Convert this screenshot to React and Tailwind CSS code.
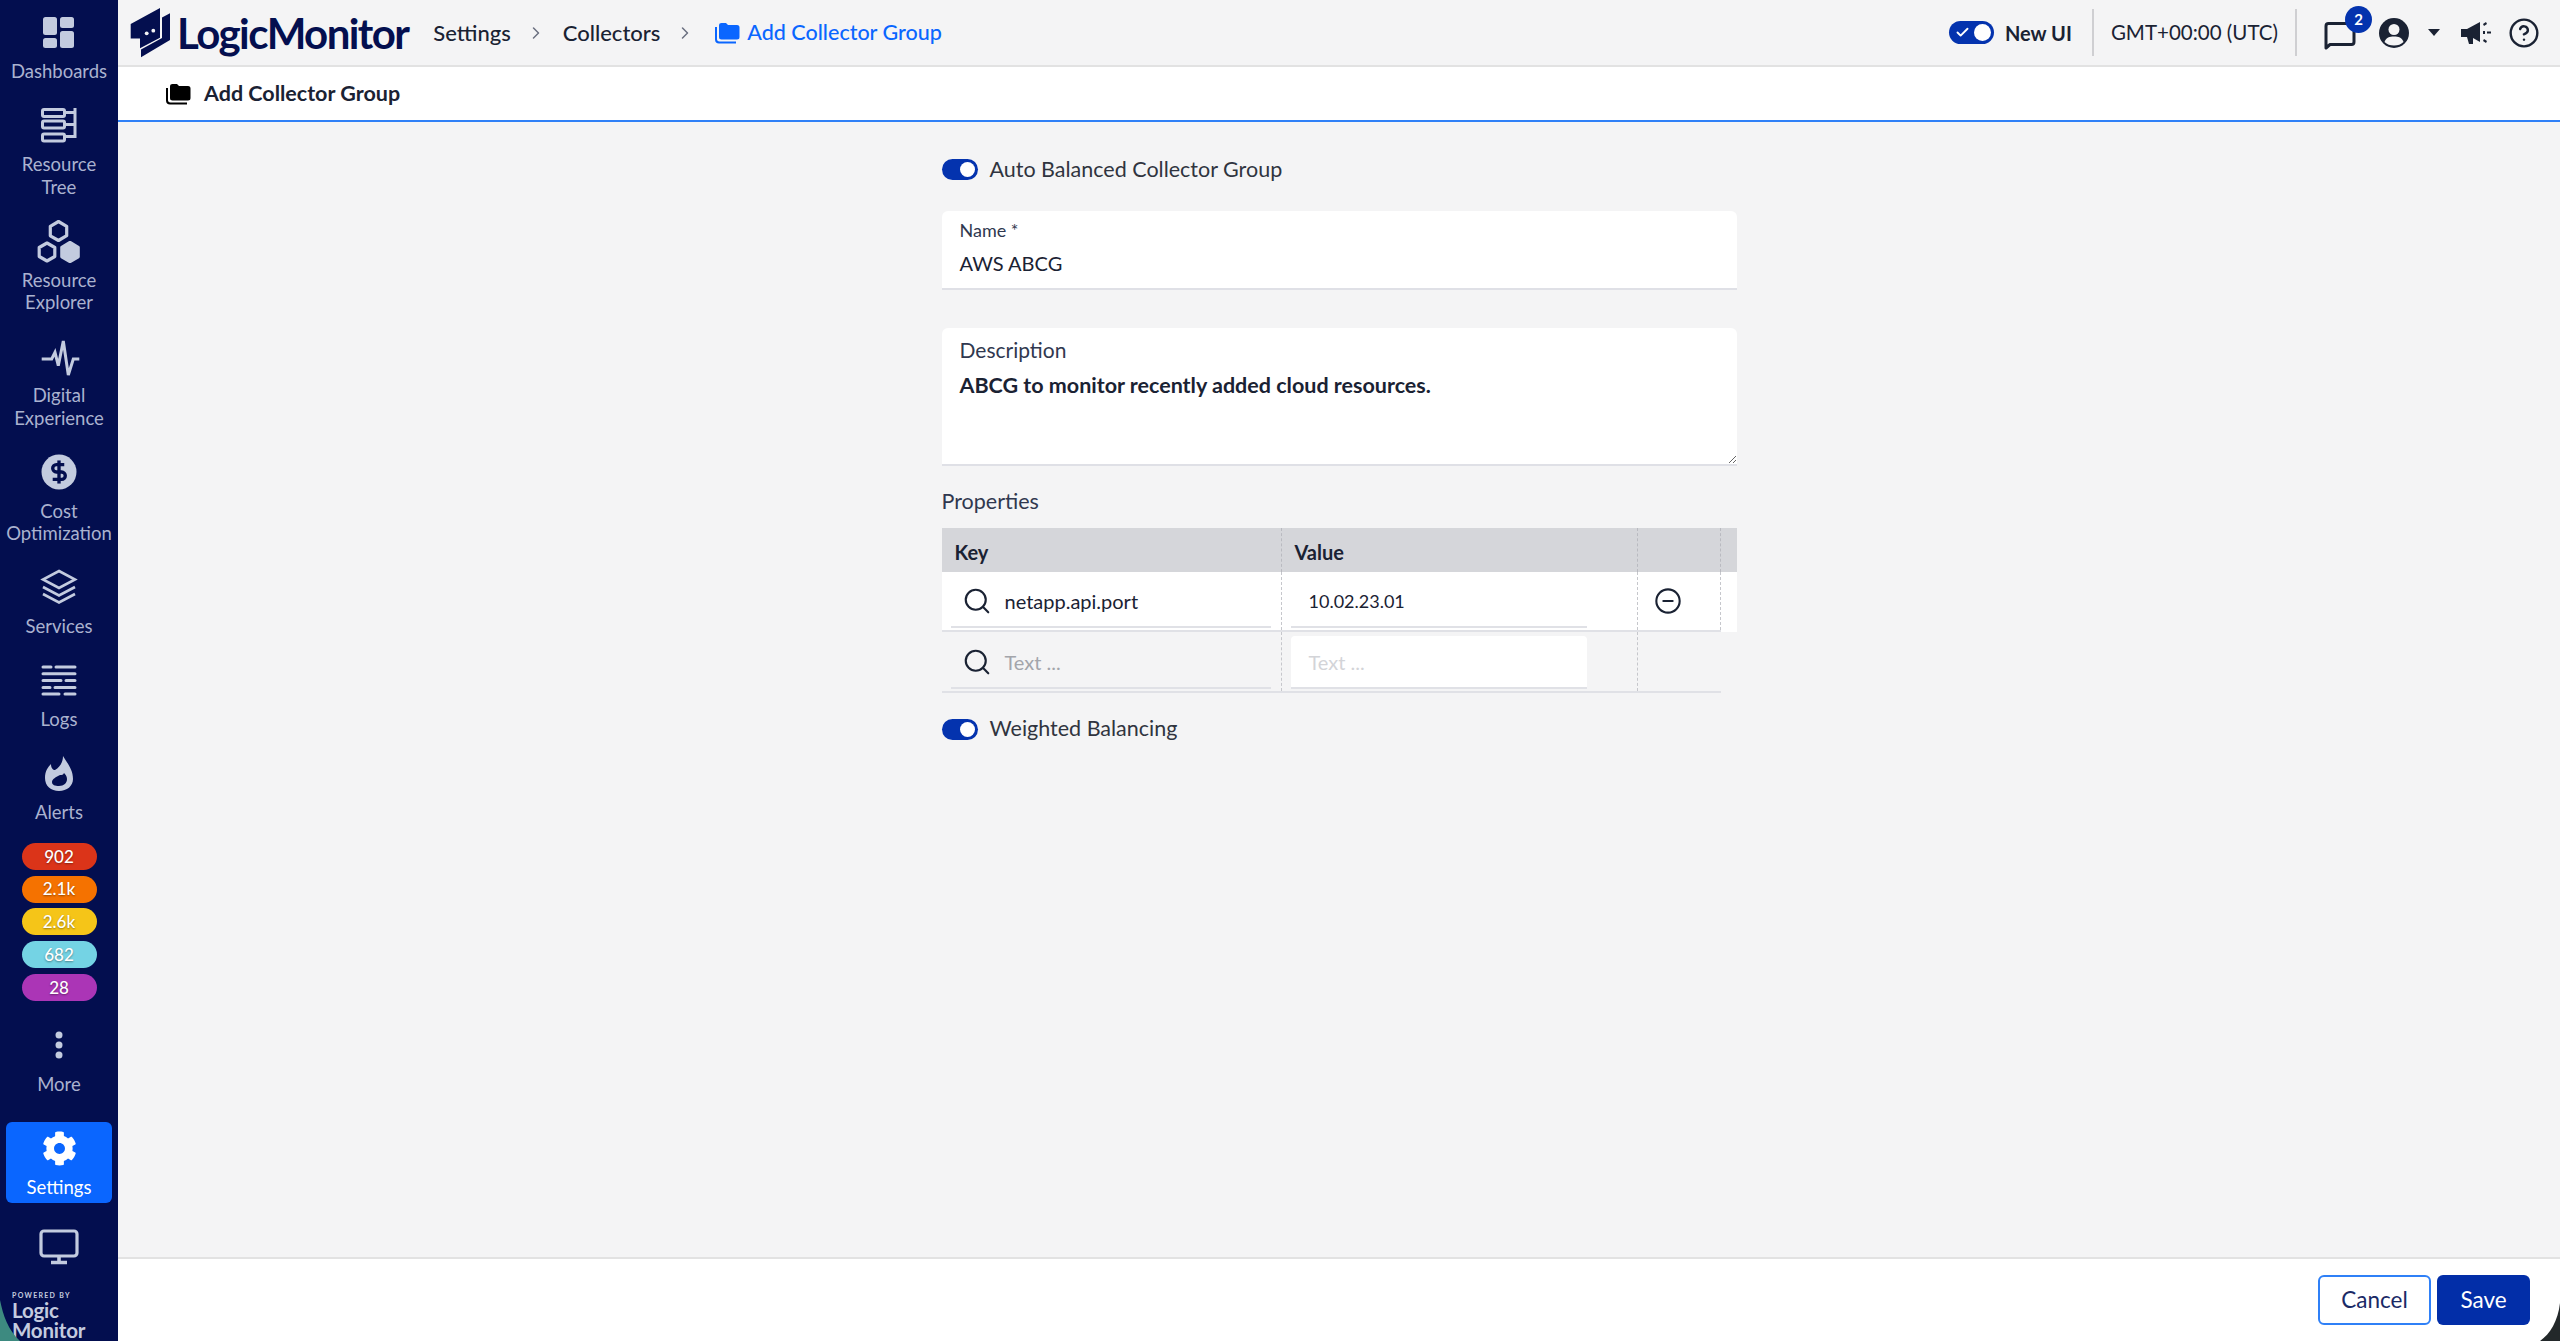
import React from 'react'
import { Search, ChevronRight, CircleMinus, CircleHelp, Check } from 'lucide-react'
import { FaCog } from 'react-icons/fa'

const hex = (cx, cy, r) =>
    [0, 1, 2, 3, 4, 5]
        .map((i) => {
            const a = (Math.PI / 3) * i - Math.PI / 2
            return `${(cx + r * Math.cos(a)).toFixed(1)},${(cy + r * Math.sin(a)).toFixed(1)}`
        })
        .join(' ')

const DashboardsIcon = () => (
    <svg viewBox="0 0 36 36" className="w-9 h-9 overflow-visible" fill="currentColor">
        <rect x="2" y="3" width="14" height="18" rx="2.5" />
        <rect x="2" y="24" width="14" height="10" rx="2.5" />
        <rect x="19" y="3" width="14" height="11" rx="2.5" />
        <rect x="19" y="17" width="14" height="17" rx="2.5" />
    </svg>
)

const TreeIcon = () => (
    <svg viewBox="0 0 36 36" className="w-9 h-9 overflow-visible" fill="none" stroke="currentColor" strokeWidth="3">
        <rect x="1.5" y="2.5" width="22" height="7" rx="1.5" />
        <rect x="1.5" y="14" width="22" height="7" rx="1.5" />
        <rect x="1.5" y="27" width="22" height="7" rx="1.5" />
        <path d="M24 5.5h10M24 17.500h10M24 29.500h10M34 1v30" />
    </svg>
)

const ExplorerIcon = () => (
    <svg viewBox="0 0 36 36" className="w-9 h-9 overflow-visible" fill="none" stroke="currentColor" strokeWidth="3.2" strokeLinejoin="round">
        <polygon points={hex(17.5, 8, 9.5)} />
        <polygon points={hex(6, 29, 9)} />
        <polygon points={hex(29, 29, 9.5)} fill="currentColor" />
    </svg>
)

const PulseIcon = () => (
    <svg viewBox="0 0 36 36" className="w-9 h-9 overflow-visible" fill="none" stroke="currentColor" strokeWidth="3">
        <path d="M0.700 21H10.700L14 14.300L17.300 27.700L22.300 3L27.300 37L32.300 21H38.300" />
    </svg>
)

const CostIcon = () => (
    <svg viewBox="0 0 36 36" className="w-9 h-9 overflow-visible">
        <circle cx="18" cy="18" r="17.500" fill="currentColor" />
        <g transform="translate(5.400 5.400) scale(1.05)" fill="none" stroke="#030e4f" strokeWidth="3.200">
            <path d="M17 5H9.500a3.500 3.500 0 0 0 0 7h5a3.500 3.500 0 0 1 0 7H6" />
            <path d="M12 1v22" />
        </g>
    </svg>
)

const LayersIcon = () => (
    <svg viewBox="0 0 36 36" className="w-9 h-9 overflow-visible" fill="none" stroke="currentColor" strokeWidth="2.600">
        <path d="M18 2L34 10.500L18 19L2 10.500Z" />
        <path d="M2 18L18 26.500L34 18" />
        <path d="M2 25L18 33.500L34 25" />
    </svg>
)

const LogsIcon = () => (
    <svg viewBox="0 0 36 36" className="w-9 h-9 overflow-visible" fill="none" stroke="currentColor" strokeWidth="3" strokeLinecap="round">
        <path d="M2 5H10M15 5H34M2 11.700H34M2 18.500H20M25 18.500H34M2 25.400H9M14 25.400H34M2 32H18M24 32H34" />
    </svg>
)

const FlameIcon = () => (
    <svg viewBox="0 0 36 36" className="w-9 h-9 overflow-visible" fill="currentColor" fillRule="evenodd">
        <path d="M22 1C26 8 32 14 32 24C32 31 26 36 18 36C10 36 4 31 4 23C4 16 7 12 10 9C10 13 12 15 14 15C19 12 22 7 22 1ZM19 20C15 22 11 24 11 27C11 30 14 31 18 31C23 31 26 28 26 24C26 21 24 19 23 18C22 20 21 20 19 20Z" />
    </svg>
)

const DotsIcon = () => (
    <svg viewBox="0 0 36 36" className="w-9 h-9 overflow-visible" fill="currentColor">
        <circle cx="18" cy="8" r="3.500" />
        <circle cx="18" cy="18" r="3.500" />
        <circle cx="18" cy="28" r="3.500" />
    </svg>
)

const FolderIcon = ({ className }) => (
    <svg viewBox="0 0 26 22" className={className} fill="currentColor">
        <path d="M5 3.500C5 1.800 6 1 7.500 1H12L14 3H23C24.800 3 25.500 4 25.500 5.500V15C25.500 16.800 24.500 17.500 23 17.500H7.500C6 17.500 5 16.800 5 15Z" />
        <path d="M1 5H3V17C3 18.500 3.800 19.500 5.500 19.500H22V21.500H5C2.500 21.500 1 20 1 17.500Z" />
    </svg>
)

const NavItem = ({ icon, label, last }) => (
    <div className={`flex flex-col items-center ${last ? '' : 'mb-[24.5px]'}`}>
        <div className="h-9 w-9 text-[#c3cbdf]">{icon}</div>
        <div className="mt-[10px] text-center text-[18.500px] leading-[22.5px] text-[#aab2cf]">{label}</div>
    </div>
)

const Toggle = ({ check, className = '' }) => (
    <div className={`relative flex items-center justify-end rounded-full bg-[#0433ae] p-[3px] ${className}`}>
        {check && <Check className="absolute left-[6px] w-[15px] h-[15px] text-white" strokeWidth={3} />}
        <div className="h-full aspect-square rounded-full bg-white" />
    </div>
)

const alertCounts = [
    { text: '902', color: 'bg-[#db3419]' },
    { text: '2.1k', color: 'bg-[#f57200]' },
    { text: '2.6k', color: 'bg-[#f5c518]' },
    { text: '682', color: 'bg-[#74d3e4]' },
    { text: '28', color: 'bg-[#ab35b6]' },
]

const Sidebar = () => (
    <div className="w-[118px] h-full shrink-0 flex flex-col overflow-hidden bg-[#030e4f] pt-[14px]">
        <NavItem icon={<DashboardsIcon />} label="Dashboards" />
        <NavItem icon={<TreeIcon />} label={<>Resource<br />Tree</>} />
        <NavItem icon={<ExplorerIcon />} label={<>Resource<br />Explorer</>} />
        <NavItem icon={<PulseIcon />} label={<>Digital<br />Experience</>} />
        <NavItem icon={<CostIcon />} label={<>Cost<br />Optimization</>} />
        <NavItem icon={<LayersIcon />} label="Services" />
        <NavItem icon={<LogsIcon />} label="Logs" />
        <NavItem icon={<FlameIcon />} label="Alerts" last />
        <div className="mt-[19.5px] flex flex-col items-center gap-[5.700px]">
            {alertCounts.map((c) => (
                <div
                    key={c.text}
                    className={`w-[75px] h-[27px] rounded-full flex items-center justify-center text-[17px] font-medium text-white [text-shadow:0_1px_2px_rgba(0,0,0,0.4)] ${c.color}`}
                >
                    {c.text}
                </div>
            ))}
        </div>
        <div className="mt-[26px]">
            <NavItem icon={<DotsIcon />} label="More" last />
        </div>
        <div className="mx-[6px] mt-[26.5px] h-[81px] rounded-[6px] bg-[#0a66ff] pt-[9px] flex flex-col items-center text-white">
            <div className="h-9 w-9 flex items-center justify-center">
                <FaCog className="w-[35px] h-[35px]" />
            </div>
            <div className="mt-[9px] text-[18.500px] leading-[22.5px]">Settings</div>
        </div>
        <div className="mt-[26px] flex justify-center text-[#c3cbdf]">
            <svg viewBox="0 0 40 36" className="w-10 h-9" fill="none" stroke="currentColor" strokeWidth="3.200">
                <rect x="2" y="2" width="36" height="25" rx="3" />
                <path d="M20 27v6M12 33.500h16" strokeWidth="3.600" />
            </svg>
        </div>
        <div className="mt-[26px] pl-3 text-[#c3cbdf] font-bold">
            <div className="text-[7px] leading-[9px] tracking-[1.300px]">POWERED BY</div>
            <div className="text-[20.500px] leading-[20px] tracking-[-0.2px]">Logic</div>
            <div className="text-[20.500px] leading-[20px] tracking-[-0.2px]">Monitor</div>
        </div>
    </div>
)

const TopBar = () => (
    <div className="h-[67px] shrink-0 flex items-center border-b-2 border-[#e2e2e2] bg-[#f4f4f5] pl-[7px] pr-5 text-[22px] text-[#1a2233]">
        <svg viewBox="0 0 45 60" className="w-[45px] h-[60px] mb-[5px]" fill="#040f4f">
            <path d="M5.700 24L35 8V37.700L15 48.300V38.500H5.700Z" />
            <path d="M45 13.300V40L16 57.300V49.500L37 38V17.500Z" />
            <circle cx="21.700" cy="33.300" r="1.900" fill="#f4f4f5" />
            <circle cx="28.300" cy="30.700" r="1.900" fill="#f4f4f5" />
        </svg>
        <div className="ml-[7px] text-[42px] leading-none font-bold tracking-[-1.600px] text-[#040f4f]">LogicMonitor</div>
        <div className="ml-[25px] font-medium">Settings</div>
        <ChevronRight className="ml-[15px] w-5 h-5 text-[#6b7080]" strokeWidth={1.800} />
        <div className="ml-[17px] font-medium">Collectors</div>
        <ChevronRight className="ml-[15px] w-5 h-5 text-[#6b7080]" strokeWidth={1.800} />
        <FolderIcon className="ml-[19px] w-[26px] h-[22px] text-[#0a66ff]" />
        <div className="ml-[7px] text-[21.500px] font-medium text-[#0a66ff]">Add Collector Group</div>
        <Toggle check className="ml-auto w-[45px] h-[23px]" />
        <div className="ml-[11px] text-[20px] font-bold">New UI</div>
        <div className="ml-5 w-[2px] h-[47px] bg-[#cfcfd2]" />
        <div className="ml-[17px] text-[20.500px]">GMT+00:00 (UTC)</div>
        <div className="ml-[17px] w-[2px] h-[47px] bg-[#cfcfd2]" />
        <div className="relative ml-[27px] w-[32px] h-[28px] mt-[6px]">
            <svg viewBox="0 0 32 28" className="w-full h-full" fill="none" stroke="#1a2233" strokeWidth="3">
                <path d="M2 26V4C2 2.500 3 1.500 4.500 1.500H27.500C29 1.500 30 2.500 30 4V20C30 21.500 29 22.500 27.500 22.500H6Z" strokeLinejoin="round" />
            </svg>
            <div className="absolute -top-[16px] -right-[16px] w-[27px] h-[27px] rounded-full bg-[#0433ae] flex items-center justify-center text-[15px] font-bold text-white">
                2
            </div>
        </div>
        <svg viewBox="0 0 30 30" className="ml-[23px] w-[30px] h-[30px]">
            <circle cx="15" cy="15" r="15" fill="#1a2233" />
            <circle cx="15" cy="11.500" r="5.500" fill="#f4f4f5" />
            <path d="M5.500 24C7 19.500 10.500 18.500 15 18.500C19.500 18.500 23 19.500 24.500 24C22 26.500 19 27.500 15 27.500C11 27.500 8 26.500 5.500 24Z" fill="#f4f4f5" />
        </svg>
        <svg viewBox="0 0 12 7" className="ml-[19px] w-3 h-[7px]" fill="#1a2233">
            <path d="M0 0H12L6 7Z" />
        </svg>
        <svg viewBox="0 0 30 26" className="ml-[21px] w-[30px] h-[26px]" fill="#1a2233">
            <path d="M0 9H6L19 2V22L12 18V24H8L6 17H0Z" />
            <path d="M22 11H24V14H22Z" />
            <path d="M22 4L25 2L26 4L23 6ZM22 21L23 19L26 21L25 23ZM26 11.500H30V13.500H26Z" />
        </svg>
        <CircleHelp className="ml-[17px] w-[32px] h-[32px] text-[#1a2233]" strokeWidth={1.800} />
    </div>
)

const SubHeader = () => (
    <div className="h-[55px] shrink-0 flex items-center border-b-2 border-[#2f80f7] bg-white pl-[47px] text-[21.500px] font-bold text-[#1a2233]">
        <FolderIcon className="w-[26px] h-[22px] text-black" />
        <div className="ml-[13px]">Add Collector Group</div>
    </div>
)

const KeyInput = ({ value, placeholder }) => (
    <div className="ml-[9px] mr-[10px] h-[52px] flex items-center border-b-2 border-[#e0e1e6] pl-[11px] text-[20px]">
        <Search className="w-[30px] h-[30px] text-[#1a2233]" strokeWidth={1.700} />
        {value ? (
            <span className="ml-[13px] text-[#1a2233]">{value}</span>
        ) : (
            <span className="ml-[13px] text-[#a3a5ab]">{placeholder}</span>
        )}
    </div>
)

const PropertiesTable = () => (
    <div className="mt-[15px] text-[20px]">
        <div className="h-[44px] flex items-center bg-[#d5d6da] font-bold text-[#1a2233]">
            <div className="w-[340px] h-full flex items-center border-r border-dashed border-[#b9bac0] pl-[13px] pt-[3px]">Key</div>
            <div className="w-[356px] h-full flex items-center border-r border-dashed border-[#b9bac0] pl-[13px] pt-[3px]">Value</div>
            <div className="w-[83px] h-full border-r border-dashed border-[#b9bac0]" />
        </div>
        <div className="h-[60px] flex bg-white">
            <div className="w-[779px] flex h-full border-b-2 border-[#e0e1e6]">
                <div className="w-[340px] border-r border-dashed border-[#c6c7cc] pt-[4px]">
                    <KeyInput value="netapp.api.port" />
                </div>
                <div className="w-[356px] border-r border-dashed border-[#c6c7cc] pt-[4px]">
                    <div className="ml-[9px] w-[296px] h-[52px] flex items-center border-b-2 border-[#e0e1e6] pl-[18px] text-[18px] text-[#1a2233]">
                        10.02.23.01
                    </div>
                </div>
                <div className="w-[83px] border-r border-dashed border-[#c6c7cc] flex items-center justify-center pr-[22px]">
                    <CircleMinus className="w-[28px] h-[28px] text-[#1a2233]" strokeWidth={1.800} />
                </div>
            </div>
        </div>
        <div className="h-[61px] w-[779px] flex border-b-2 border-[#e0e1e6]">
            <div className="w-[340px] border-r border-dashed border-[#c6c7cc] pt-[5px]">
                <KeyInput placeholder="Text ..." />
            </div>
            <div className="w-[356px] border-r border-dashed border-[#c6c7cc] pt-[4px]">
                <div className="ml-[9px] w-[296px] h-[53px] flex items-center rounded-t-[4px] border-b-2 border-[#e0e1e6] bg-white pl-[18px] text-[#d3d4d8]">
                    Text ...
                </div>
            </div>
        </div>
    </div>
)

const Footer = () => (
    <div className="h-[84px] shrink-0 flex items-center justify-end gap-[6px] border-t-2 border-[#e2e2e2] bg-white pr-[30px] text-[22.500px]">
        <button className="w-[113px] h-[50px] rounded-[6px] border-2 border-[#2f80f7] text-[#1a2a66]">Cancel</button>
        <button className="w-[93px] h-[50px] rounded-[6px] bg-[#022ea8] text-white">Save</button>
    </div>
)

const App = () => {
    return (
        <div className="relative h-screen w-full flex overflow-hidden bg-[#f4f4f5] font-['Lato',sans-serif] text-[#1a2233]">
            <Sidebar />
            <div className="flex-1 min-w-0 flex flex-col">
                <TopBar />
                <SubHeader />
                <div className="flex-1">
                    <div className="mx-auto w-[795px] pt-[37px]">
                        <div className="flex items-center h-[21px]">
                            <Toggle className="w-[36px] h-[21px]" />
                            <div className="ml-[12px] -mt-[1px] text-[21.500px] text-[#30343f]">Auto Balanced Collector Group</div>
                        </div>
                        <div className="mt-[31px] h-[79px] rounded-t-[6px] border-b-2 border-[#dfe0e6] bg-white pl-[18px] pt-[8px]">
                            <div className="text-[18px] leading-[22px] text-[#30384f]">Name *</div>
                            <div className="mt-[10px] text-[20px] leading-[24px] text-[#1a2233]">AWS ABCG</div>
                        </div>
                        <div className="mt-[38px] h-[138px] flex flex-col rounded-t-[6px] border-b-2 border-[#dfe0e6] bg-white pt-[10px]">
                            <div className="pl-[18px] text-[21px] leading-[24px] text-[#30384f]">Description</div>
                            <textarea
                                readOnly
                                className="mt-[11px] flex-1 w-full bg-transparent pl-[18px] text-[21.500px] leading-[24px] font-bold text-[#1a2233] outline-none"
                                defaultValue="ABCG to monitor recently added cloud resources."
                            />
                        </div>
                        <div className="mt-[23px] text-[21.500px] leading-[24px] text-[#30384f]">Properties</div>
                        <PropertiesTable />
                        <div className="mt-[26px] flex items-center h-[21px]">
                            <Toggle className="w-[36px] h-[21px]" />
                            <div className="ml-[12px] -mt-[2px] text-[21.500px] text-[#30343f]">Weighted Balancing</div>
                        </div>
                    </div>
                </div>
                <Footer />
            </div>
            {/* rounded screen corners caught in the capture */}
            <svg viewBox="0 0 20 44" className="absolute bottom-0 left-0 w-5 h-11" fill="#3d8a80">
                <path d="M0 3C3 18 8 33 20 44H0Z" />
            </svg>
            <svg viewBox="0 0 20 40" className="absolute bottom-0 right-0 w-5 h-10" fill="#23282a">
                <path d="M20 2C18 20 10 33 0 40H20Z" />
            </svg>
        </div>
    )
}

export default App
